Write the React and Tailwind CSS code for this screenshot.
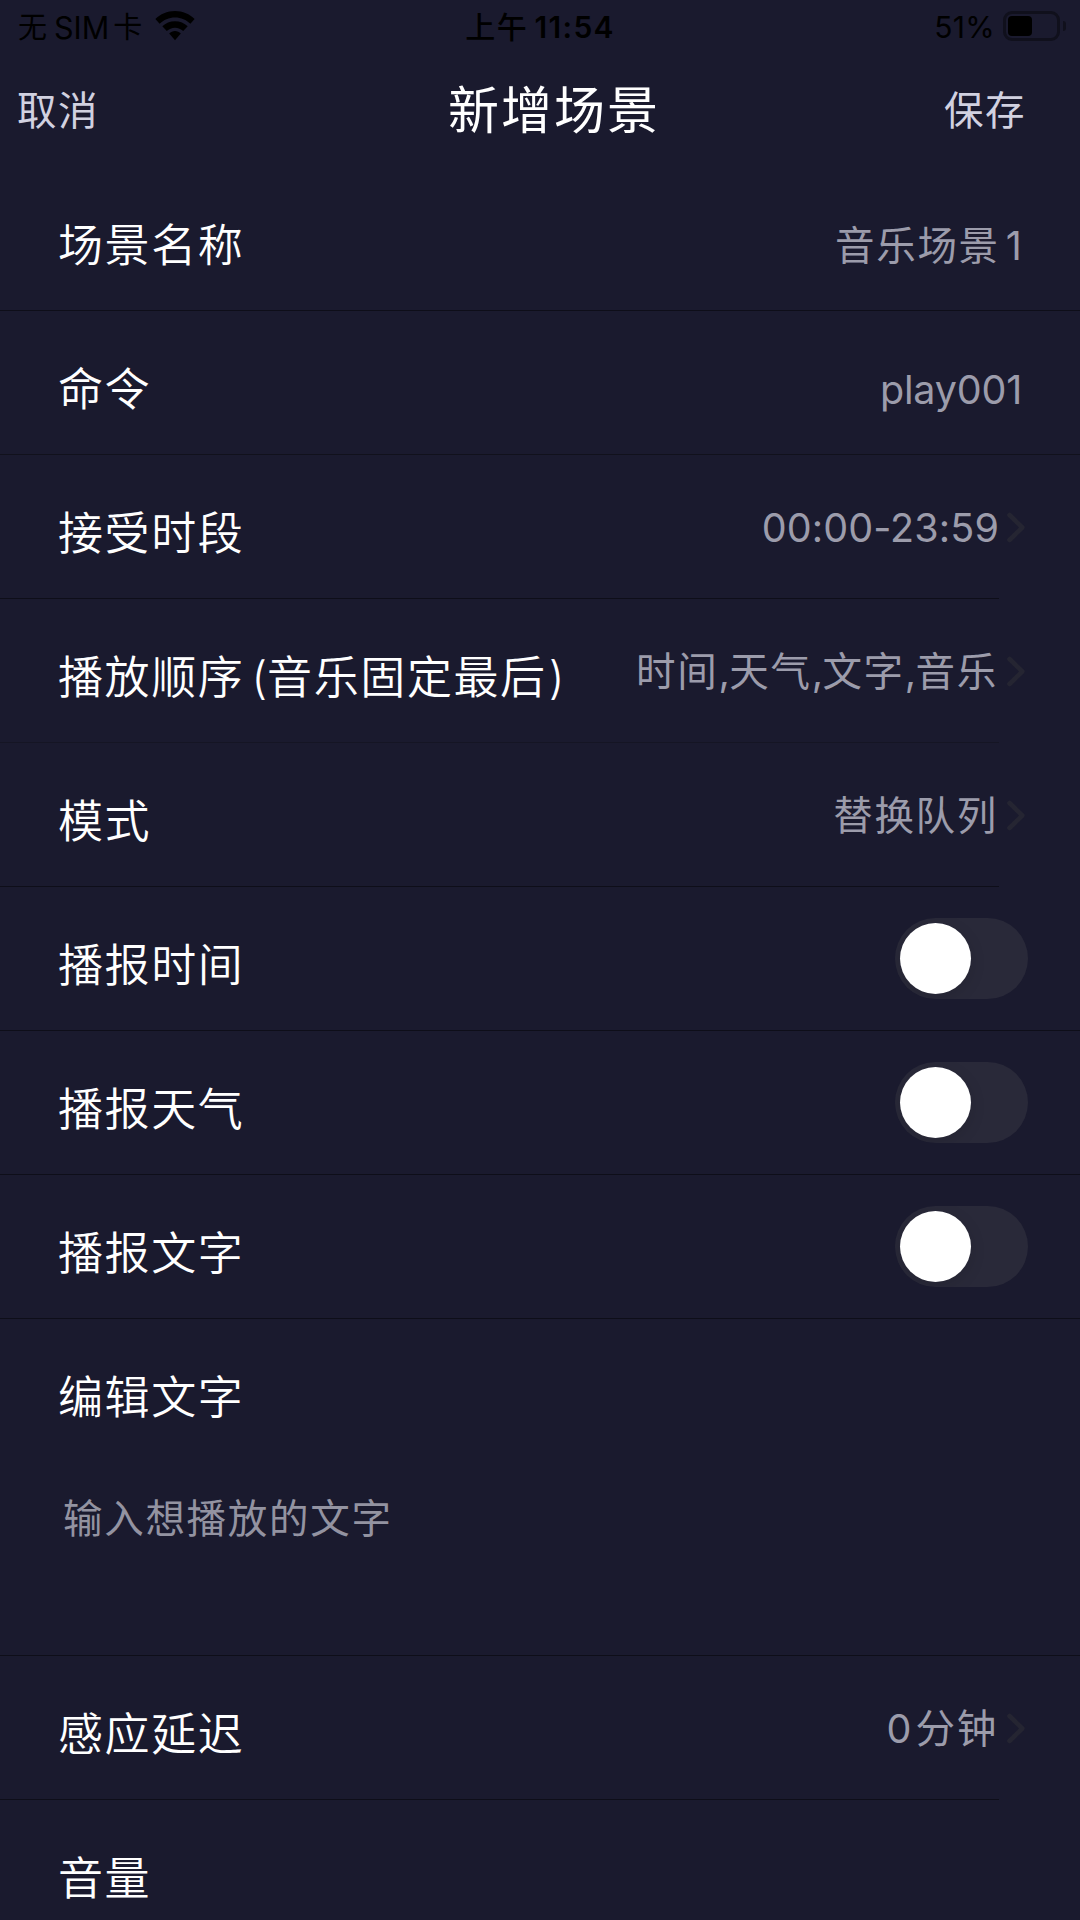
import { useState } from "react";

const rows = [
  { label: "场景名称", value: "音乐场景1", low: true },
  { label: "命令", value: "play001", low: true, line: "bg-[#11111c]" },
  { label: "接受时段", value: "00:00-23:59", arrow: true },
  { label: "播放顺序(音乐固定最后)", value: "时间,天气,文字,音乐", arrow: true, line: "bg-[#151524]" },
  { label: "模式", value: "替换队列", arrow: true },
  { label: "播报时间", toggle: true },
  { label: "播报天气", toggle: true },
  { label: "播报文字", toggle: true },
];

// latin runs sit tighter than the CJK text around them
function Mixed({ text }) {
  return text.split(/([\x20-\x7e]+)/).filter(Boolean).map((part, i, parts) => {
    if (!/^[\x20-\x7e]/.test(part)) return <span key={i}>{part}</span>;
    if (part === ",") return <span key={i} className="tracking-[-0.6px]">,</span>;
    if (part === "(") return <span key={i} className="ml-[7px] tracking-normal">(</span>;
    if (part === ")") return <span key={i} className="ml-[2px] tracking-normal">)</span>;
    if (part.includes(":")) return <span key={i} className="mr-[-1px] tracking-[0.1px]">{part}</span>;
    const before = i > 0 ? "ml-[6px]" : "";
    const after = i === 0 && parts.length > 1 ? "mr-[4px]" : "mr-[2px]";
    const tight = /[a-z]/.test(part) ? "tracking-[-0.2px]" : "tracking-[0.1px]";
    return <span key={i} className={`${tight} ${before} ${after}`}>{part}</span>;
  });
}

function Chevron() {
  return (
    <svg className="ml-[8px] h-[34px] w-[21px] shrink-0" viewBox="0 0 21 34" fill="none">
      <path d="M3.5 4 L16.3 16.5 L3.5 29" stroke="#252532" strokeWidth="4.6" strokeLinecap="round" strokeLinejoin="round" />
    </svg>
  );
}

function Toggle() {
  const [on, setOn] = useState(false);
  return (
    <button
      type="button"
      onClick={() => setOn(!on)}
      className={`mr-[-4px] flex h-[81px] w-[133px] items-center overflow-hidden rounded-full px-[5px] ${on ? "justify-end bg-green-500" : "justify-start bg-[#292939]"}`}
    >
      <span className="size-[71px] rounded-full bg-white shadow-[0_4px_16px_rgba(0,0,0,0.12)]" />
    </button>
  );
}

function Label({ text }) {
  return (
    <span className="text-[45px] leading-[60px] font-[350] tracking-[1.6px] whitespace-nowrap text-white">
      <Mixed text={text} />
    </span>
  );
}

function Value({ text }) {
  return (
    <span className="text-[39.5px] leading-[52px] tracking-[1.7px] whitespace-nowrap text-[#9c9cab]">
      <Mixed text={text} />
    </span>
  );
}

function Row({ label, value, arrow, toggle, low, line = "bg-[#0e0e19]" }) {
  return (
    <div className="flex h-[144px] shrink-0 flex-col">
      <div className={`flex flex-1 items-center justify-between pl-[58px] ${arrow ? "pr-[53px]" : "pr-[56px]"}`}>
        <div className="pt-[14px]">
          <Label text={label} />
        </div>
        <div className={`flex items-center ${low ? "pt-[14px]" : ""} ${arrow ? "pt-[2px]" : ""}`}>
          {value && <Value text={value} />}
          {arrow && <Chevron />}
          {toggle && <Toggle />}
        </div>
      </div>
      <div className={`h-px ${arrow ? "mr-[81px]" : ""} ${line}`} />
    </div>
  );
}

function StatusBar() {
  return (
    <div className="grid h-[54px] shrink-0 grid-cols-3 items-center pr-[14px] pl-[18px] text-[30px] leading-[40px] text-black">
      <div className="flex items-center">
        <span className="pt-[2px] text-[29px]">无</span>
        <span className="ml-[7px] pt-px text-[30.5px]">SIM</span>
        <span className="ml-[4px] pt-[2px] text-[29px]">卡</span>
        <svg className="mb-[2px] ml-[13px] h-[30px] w-[40px]" viewBox="0 0 40 30">
          <path d="M20 0 C12.2 0 5.3 3.1 0.4 8 L4.6 12.8 C8.6 8.9 14 6.5 20 6.5 C26 6.5 31.4 8.9 35.4 12.8 L39.6 8 C34.7 3.1 27.8 0 20 0Z" />
          <path d="M20 10.2 C15.1 10.2 10.6 12.1 7.3 15.2 L11.8 20 C14 18 16.8 16.7 20 16.7 C23.2 16.7 26 18 28.2 20 L32.7 15.2 C29.4 12.1 24.9 10.2 20 10.2Z" />
          <path d="M20 20.1 C17.8 20.1 15.7 21 14.2 22.6 L20 29.2 L25.8 22.6 C24.3 21 22.2 20.1 20 20.1Z" />
        </svg>
      </div>
      <div className="flex items-center justify-center pr-[4px] font-semibold">
        <span className="font-medium tracking-[1.7px]">上午</span>
        <span className="ml-[6px] tracking-[1.3px]">11:54</span>
      </div>
      <div className="flex items-center justify-end">
        <span className="tracking-[0.3px]">51%</span>
        <div className="mb-[2px] ml-[8px] flex h-[30px] w-[57px] items-center rounded-[9px] border-[3px] border-[#10101c] pl-[2px]">
          <div className="h-[20px] w-[24px] rounded-[4px] bg-black" />
        </div>
        <div className="mb-[2px] ml-[3px] h-[10px] w-[3px] rounded-r-full bg-[#10101c]" />
      </div>
    </div>
  );
}

export default function App() {
  return (
    <div className="flex h-[1920px] w-[1080px] flex-col overflow-hidden bg-[#1a1a2e] font-['Inter','Noto_Sans_CJK_SC',sans-serif]">
      <StatusBar />
      <header className="grid h-[113px] shrink-0 grid-cols-3 items-start pr-[54px] pl-[17px] pt-[24px] text-[39.5px] leading-[66px] tracking-[1.5px] text-[#d1d1e0]">
        <button type="button" className="text-left">取消</button>
        <h1 className="pl-[65px] text-center text-[51px] tracking-[2px] text-white">新增场景</h1>
        <button type="button" className="text-right">保存</button>
      </header>

      {rows.map((row) => (
        <Row key={row.label} {...row} />
      ))}

      <section className="flex h-[337px] shrink-0 flex-col">
        <div className="flex-1 pt-[49px] pl-[58px]">
          <Label text="编辑文字" />
          <p className="pt-[65px] pl-[5px] text-[39.5px] leading-[52px] tracking-[1.7px] text-[#9393a1]">输入想播放的文字</p>
        </div>
        <div className="h-px bg-[#0e0e19]" />
      </section>

      <Row label="感应延迟" value="0分钟" arrow />
      <Row label="音量" />
    </div>
  );
}
